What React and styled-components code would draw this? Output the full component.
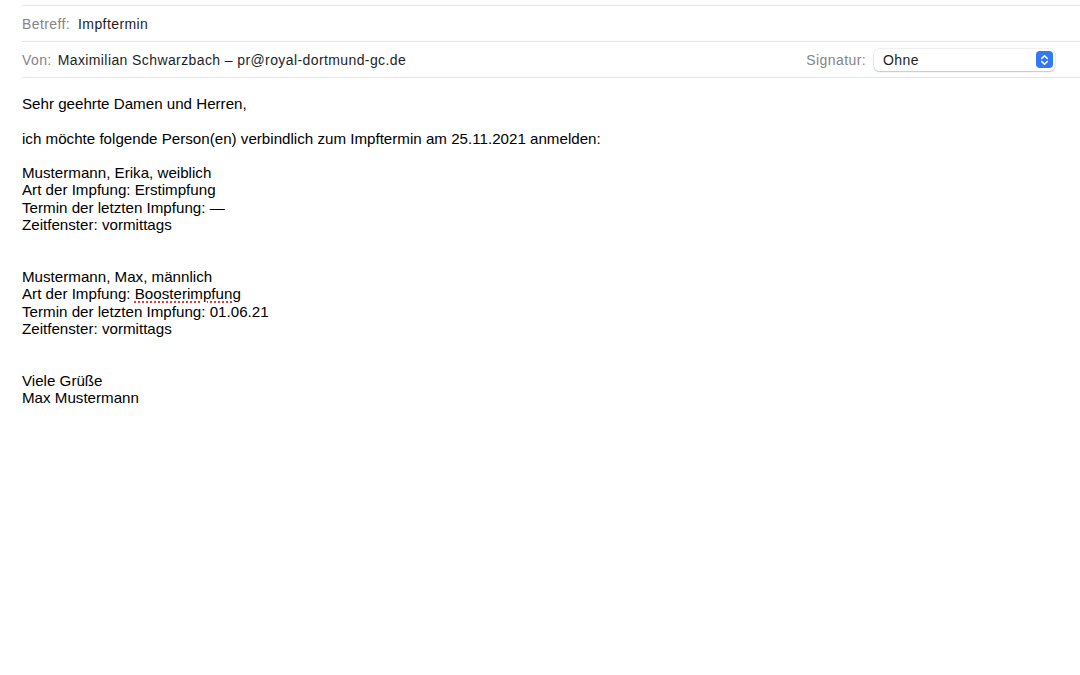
import React from "react";
import styled, { createGlobalStyle } from "styled-components";

const Global = createGlobalStyle`
  html, body { margin: 0; padding: 0; background: #fff; }
  body { font-family: "Liberation Sans", Arial, sans-serif; -webkit-font-smoothing: antialiased; }
`;

const Page = styled.div`
  width: 1080px;
  height: 675px;
  background: #fff;
  overflow: hidden;
  padding-top: 5px;
  box-sizing: border-box;
`;

const HeaderRow = styled.div`
  margin-left: 22px;
  border-top: 1px solid #e4e4e4;
  height: ${(p) => p.$h}px;
  display: flex;
  align-items: center;
  font-size: 14px;
  letter-spacing: 0.4px;
  ${(p) => (p.$last ? "border-bottom: 1px solid #e4e4e4;" : "")}
`;

const Label = styled.span`
  color: #858585;
  margin-right: ${(p) => p.$gap || 6}px;
`;

const Value = styled.span`
  color: #1e1e1e;
`;

const Spacer = styled.div`
  flex: 1;
`;

const SigLabel = styled.span`
  color: #858585;
  margin-right: 8px;
`;

const Select = styled.div`
  width: 181px;
  height: 22px;
  box-sizing: border-box;
  border-radius: 5px;
  background: #fff;
  box-shadow: 0 0 0 0.5px rgba(0, 0, 0, 0.12), 0 1px 1.5px rgba(0, 0, 0, 0.18);
  display: flex;
  align-items: center;
  padding: 0 2px 0 9px;
  margin-right: 25px;
  color: #1e1e1e;
`;

const Stepper = styled.div`
  width: 17px;
  height: 17px;
  border-radius: 4px;
  background: #3478f6;
  display: flex;
  align-items: center;
  justify-content: center;
`;

const Body = styled.div`
  padding: 17px 22px 0;
  font-size: 15.15px;
  line-height: 17.3px;
  color: #000;
`;

const Line = styled.div`
  min-height: 17.3px;
  white-space: pre;
`;

const Misspelled = styled.span`
  text-decoration: underline dotted #e0393e;
  text-decoration-thickness: 1.5px;
  text-underline-offset: 2px;
`;

const lines = [
  "Sehr geehrte Damen und Herren,",
  "",
  "ich möchte folgende Person(en) verbindlich zum Impftermin am 25.11.2021 anmelden:",
  "",
  "Mustermann, Erika, weiblich",
  "Art der Impfung: Erstimpfung",
  "Termin der letzten Impfung: —",
  "Zeitfenster: vormittags",
  "",
  "",
  "Mustermann, Max, männlich",
  "BOOSTER",
  "Termin der letzten Impfung: 01.06.21",
  "Zeitfenster: vormittags",
  "",
  "",
  "Viele Grüße",
  "Max Mustermann",
];

export default function App() {
  return (
    <Page>
      <Global />
      <HeaderRow $h={35}>
        <Label $gap={8}>Betreff:</Label>
        <Value>Impftermin</Value>
      </HeaderRow>
      <HeaderRow $h={35} $last>
        <Label>Von:</Label>
        <Value>Maximilian Schwarzbach – pr@royal-dortmund-gc.de</Value>
        <Spacer />
        <SigLabel>Signatur:</SigLabel>
        <Select>
          <Value>Ohne</Value>
          <Spacer />
          <Stepper>
            <svg width="9" height="12" viewBox="0 0 9 12" fill="none">
              <path d="M1.8 4.4 L4.5 1.8 L7.2 4.4" stroke="#fff" strokeWidth="1.5" strokeLinecap="round" strokeLinejoin="round" />
              <path d="M1.8 7.6 L4.5 10.2 L7.2 7.6" stroke="#fff" strokeWidth="1.5" strokeLinecap="round" strokeLinejoin="round" />
            </svg>
          </Stepper>
        </Select>
      </HeaderRow>
      <Body>
        {lines.map((l, i) =>
          l === "BOOSTER" ? (
            <Line key={i}>
              Art der Impfung: <Misspelled>Boosterimpfung</Misspelled>
            </Line>
          ) : (
            <Line key={i}>{l}</Line>
          )
        )}
      </Body>
    </Page>
  );
}
